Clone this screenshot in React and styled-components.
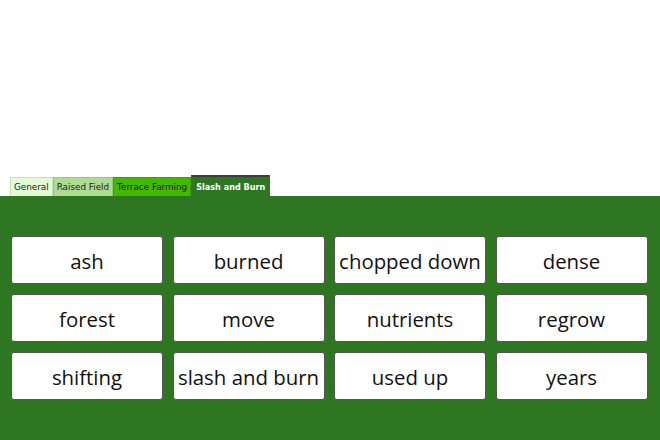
import styled, { createGlobalStyle } from "styled-components";

const GlobalStyle = createGlobalStyle`
  html, body {
    margin: 0;
    padding: 0;
    background: #ffffff;
  }
  body {
    font-family: "DejaVu Sans", Verdana, sans-serif;
  }
`;

const Page = styled.div`
  width: 660px;
  height: 440px;
  display: flex;
  flex-direction: column;
  overflow: hidden;
`;

const TabBar = styled.div`
  display: flex;
  align-items: flex-end;
  padding: 0 0 0 10px;
  margin-top: 175px;
  height: 21px;
`;

const Tab = styled.div`
  height: ${(p) => (p.active ? "21px" : "19px")};
  padding: 0 ${(p) => (p.active ? "4px" : "3px")};
  display: flex;
  align-items: center;
  box-sizing: border-box;
  font-size: ${(p) => (p.active ? "8.1px" : "8.8px")};
  font-weight: ${(p) => (p.active ? "bold" : "normal")};
  color: ${(p) => p.fg};
  background: ${(p) => p.bg};
  border: 1px solid ${(p) => p.edge};
  border-bottom: none;
  border-top: ${(p) => (p.active ? "2px solid #3c3c3c" : `1px solid ${p.edge}`)};
  white-space: nowrap;
`;

const Panel = styled.div`
  flex: 1;
  background: #2e7622;
  padding: 40px 11px 0 11px;
`;

const Grid = styled.div`
  display: grid;
  grid-template-columns: repeat(4, 152px);
  grid-auto-rows: 48px;
  column-gap: 9.5px;
  row-gap: 10px;
`;

const Card = styled.div`
  background: #ffffff;
  border: 1px solid #555;
  border-radius: 3px;
  box-sizing: border-box;
  display: flex;
  align-items: center;
  justify-content: center;
  padding-top: 2px;
  font-family: "Open Sans", sans-serif;
  font-size: 20.4px;
  color: #111;
  white-space: nowrap;
`;

const tabs = [
  { label: "General", bg: "#e2fbd6", edge: "#c9dfbd", fg: "#222" },
  { label: "Raised Field", bg: "#aedc92", edge: "#98c880", fg: "#222" },
  { label: "Terrace Farming", bg: "#43b800", edge: "#3aa000", fg: "#1a1a1a" },
  { label: "Slash and Burn", bg: "#2e7622", edge: "#2e7622", fg: "#fff", active: true },
];

const words = [
  "ash", "burned", "chopped down", "dense",
  "forest", "move", "nutrients", "regrow",
  "shifting", "slash and burn", "used up", "years",
];

export default function App() {
  return (
    <Page>
      <GlobalStyle />
      <TabBar>
        {tabs.map((t) => (
          <Tab key={t.label} bg={t.bg} edge={t.edge} fg={t.fg} active={t.active}>
            {t.label}
          </Tab>
        ))}
      </TabBar>
      <Panel>
        <Grid>
          {words.map((w) => (
            <Card key={w}>{w}</Card>
          ))}
        </Grid>
      </Panel>
    </Page>
  );
}
